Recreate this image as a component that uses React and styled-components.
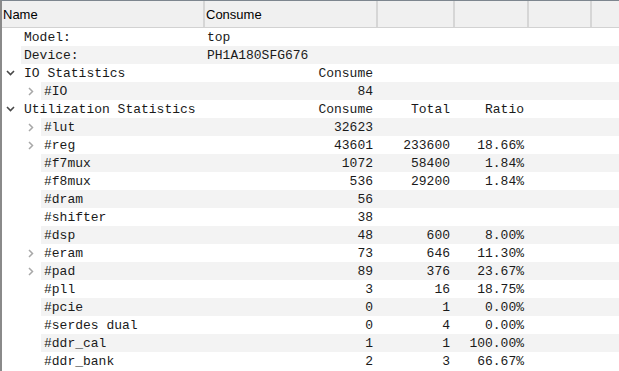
import React from 'react';
import styled, { createGlobalStyle } from 'styled-components';

const GlobalStyle = createGlobalStyle`
	html, body {
		margin: 0;
		padding: 0;
		background: #ffffff;
		overflow: hidden;
	}
`;

const TreeView = styled.div`
	width: 619px;
	height: 371px;
	box-sizing: border-box;
	border-top: 1px solid #7d868f;
	border-left: 2px solid #8a8a8a;
	background: #ffffff;
	overflow: hidden;
`;

const HeaderBar = styled.div`
	display: grid;
	grid-template-columns: 203px 173px 77px 74px 63px 1fr;
	height: 26px;
	background: #f0f0f0;
	border-bottom: 1px solid #d2d2d2;
	font-family: "Liberation Sans", Arial, sans-serif;
	font-size: 13px;
	color: #000;
`;

const HeaderCell = styled.div`
	display: flex;
	align-items: center;
	padding-left: ${p => p.$pad}px;
	border-right: ${p => (p.$last ? 'none' : '2px solid #d6d6d6')};
	white-space: nowrap;
`;

const Row = styled.div`
	display: flex;
	height: 18px;
	font-family: "Liberation Mono", "Courier New", monospace;
	font-size: 13px;
	color: #1a1a1a;
	white-space: pre;
`;

const Indent = styled.div`
	flex: none;
	width: ${p => p.$width}px;
	display: flex;
	align-items: center;
	padding-left: ${p => p.$arrowX}px;
	box-sizing: border-box;
`;

const Band = styled.div`
	flex: 1;
	display: grid;
	grid-template-columns: ${p => p.$first}px 173px 77px 74px 1fr;
	background: ${p => (p.$shade ? '#f3f3f3' : '#ffffff')};
	padding-top: 2px;
	line-height: 16px;
`;

const NameCell = styled.div`
	padding-left: 3px;
`;

const ValueCell = styled.div`
	text-align: ${p => (p.$left ? 'left' : 'right')};
	padding: ${p => (p.$left ? '0 0 0 2px' : '0 5px 0 0')};
`;

const Chevron = ({ open }) =>
	open ? (
		<svg width="9" height="6" viewBox="0 0 9 6">
			<path d="M1 1 L4.5 4.5 L8 1" fill="none" stroke="#484848" strokeWidth="1.6" />
		</svg>
	) : (
		<svg width="6" height="9" viewBox="0 0 6 9">
			<path d="M1 1 L4.5 4.5 L1 8" fill="none" stroke="#a8a8a8" strokeWidth="1.5" />
		</svg>
	);

const rows = [
	{ depth: 1, name: 'Model:', consume: 'top', left: true },
	{ depth: 1, name: 'Device:', consume: 'PH1A180SFG676', left: true },
	{ depth: 1, name: 'IO Statistics', arrow: 'open', consume: 'Consume' },
	{ depth: 2, name: '#IO', arrow: 'closed', consume: '84' },
	{ depth: 1, name: 'Utilization Statistics', arrow: 'open', consume: 'Consume', total: 'Total', ratio: 'Ratio' },
	{ depth: 2, name: '#lut', arrow: 'closed', consume: '32623' },
	{ depth: 2, name: '#reg', arrow: 'closed', consume: '43601', total: '233600', ratio: '18.66%' },
	{ depth: 2, name: '#f7mux', consume: '1072', total: '58400', ratio: '1.84%' },
	{ depth: 2, name: '#f8mux', consume: '536', total: '29200', ratio: '1.84%' },
	{ depth: 2, name: '#dram', consume: '56' },
	{ depth: 2, name: '#shifter', consume: '38' },
	{ depth: 2, name: '#dsp', consume: '48', total: '600', ratio: '8.00%' },
	{ depth: 2, name: '#eram', arrow: 'closed', consume: '73', total: '646', ratio: '11.30%' },
	{ depth: 2, name: '#pad', arrow: 'closed', consume: '89', total: '376', ratio: '23.67%' },
	{ depth: 2, name: '#pll', consume: '3', total: '16', ratio: '18.75%' },
	{ depth: 2, name: '#pcie', consume: '0', total: '1', ratio: '0.00%' },
	{ depth: 2, name: '#serdes dual', consume: '0', total: '4', ratio: '0.00%' },
	{ depth: 2, name: '#ddr_cal', consume: '1', total: '1', ratio: '100.00%' },
	{ depth: 2, name: '#ddr_bank', consume: '2', total: '3', ratio: '66.67%' },
];

const indentFor = {
	1: { width: 19, arrowX: 4, first: 184 },
	2: { width: 39, arrowX: 26, first: 164 },
};

export default function App() {
	return (
		<>
			<GlobalStyle />
			<TreeView>
				<HeaderBar>
					<HeaderCell $pad={1}>Name</HeaderCell>
					<HeaderCell $pad={1}>Consume</HeaderCell>
					<HeaderCell />
					<HeaderCell />
					<HeaderCell />
					<HeaderCell $last />
				</HeaderBar>
				{rows.map((r, i) => {
					const ind = indentFor[r.depth];
					return (
						<Row key={r.name}>
							<Indent $width={ind.width} $arrowX={ind.arrowX}>
								{r.arrow && <Chevron open={r.arrow === 'open'} />}
							</Indent>
							<Band $first={ind.first} $shade={i % 2 === 1}>
								<NameCell>{r.name}</NameCell>
								<ValueCell $left={r.left}>{r.consume}</ValueCell>
								<ValueCell>{r.total}</ValueCell>
								<ValueCell>{r.ratio}</ValueCell>
								<div />
							</Band>
						</Row>
					);
				})}
			</TreeView>
		</>
	);
}
